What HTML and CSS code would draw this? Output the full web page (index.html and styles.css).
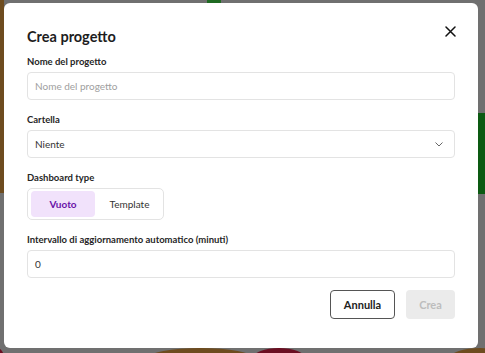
FILE: index.html
```html
<!DOCTYPE html>
<html lang="it">
<head>
<meta charset="utf-8">
<link rel="stylesheet" href="styles.css">
</head>
<body>
<div class="backdrop">
  <div class="bg-left"></div>
  <div class="bg-top"></div>
  <div class="bg-right"></div>
  <div class="bg-bottom">
    <span class="dot crimson d1"></span>
    <span class="dot brown d2"></span>
    <span class="dot crimson d3"></span>
    <span class="dot brown d4"></span>
  </div>
</div>
<div class="modal">
  <div class="header">
    <h1 class="title">Crea progetto</h1>
    <button class="close" aria-label="Chiudi">
      <svg width="11" height="11" viewBox="0 0 11 11"><path d="M1 1L10 10M10 1L1 10" stroke="#111" stroke-width="1.5" stroke-linecap="round"/></svg>
    </button>
  </div>
  <div class="field">
    <label class="label">Nome del progetto</label>
    <div class="input placeholder">Nome del progetto</div>
  </div>
  <div class="field">
    <label class="label">Cartella</label>
    <div class="input select">
      <span>Niente</span>
      <svg width="8" height="5" viewBox="0 0 8 5"><path d="M0.5 0.5L4 4L7.5 0.5" fill="none" stroke="#666" stroke-width="1"/></svg>
    </div>
  </div>
  <div class="field">
    <label class="label">Dashboard type</label>
    <div class="segment">
      <span class="seg active">Vuoto</span>
      <span class="seg">Template</span>
    </div>
  </div>
  <div class="field">
    <label class="label">Intervallo di aggiornamento automatico (minuti)</label>
    <div class="input">0</div>
  </div>
  <div class="actions">
    <button class="btn outline">Annulla</button>
    <button class="btn disabled">Crea</button>
  </div>
</div>
</body>
</html>
```
FILE: styles.css
```css
* { box-sizing: border-box; }
html, body { margin: 0; padding: 0; }
body {
  width: 485px;
  height: 353px;
  overflow: hidden;
  background: #707070;
  font-family: "Lato", "Open Sans", sans-serif;
  position: relative;
}
.backdrop { position: absolute; inset: 0; }
.bg-left { position: absolute; left: 0; top: 0; width: 4px; height: 193px; background: #6e4c1f; }
.bg-top { position: absolute; left: 207px; top: 0; width: 14px; height: 3px; background: #1f6a22; }
.bg-right { position: absolute; left: 478px; top: 113px; width: 7px; height: 81px; background: #0c5a12; }
.bg-bottom { position: absolute; left: 0; top: 348px; width: 485px; height: 5px; overflow: hidden; }
.dot { position: absolute; top: 0; height: 20px; border-radius: 50%; }
.crimson { background: #6b0f22; }
.brown { background: #6e4c1f; }
.d1 { left: -10px; width: 14px; }
.d2 { left: 148px; width: 105px; }
.d3 { left: 253px; width: 52px; }
.d4 { left: 450px; width: 60px; }

.modal {
  position: absolute;
  left: 4px;
  top: 3px;
  width: 474px;
  height: 345px;
  background: #fff;
  border-radius: 6px;
  padding: 24px 23px 0 23px;
  display: flex;
  flex-direction: column;
}
.header {
  display: flex;
  justify-content: space-between;
  align-items: flex-start;
  height: 29px;
}
.title {
  margin: 0;
  font-size: 14.5px;
  font-weight: 700;
  color: #1d1d1d;
  line-height: 20px;
}
.close {
  border: 0;
  background: none;
  padding: 0;
  margin: -1px -1px 0 0;
  width: 11px;
  height: 11px;
  display: flex;
}
.field { display: flex; flex-direction: column; margin-bottom: 14px; }
.label {
  font-size: 9.5px;
  font-weight: 700;
  color: #262626;
  line-height: 12px;
  margin-bottom: 4px;
}
.input {
  height: 28px;
  border: 1px solid #e3e3e3;
  border-radius: 4px;
  padding: 0 7px;
  font-size: 10px;
  color: #333;
  display: flex;
  align-items: center;
}
.placeholder { color: #a0a0a0; }
.select { justify-content: space-between; padding-right: 11px; }
.segment {
  align-self: flex-start;
  width: 137px;
  height: 32px;
  border: 1px solid #e3e3e3;
  border-radius: 5px;
  padding: 2px 3px;
  display: flex;
  gap: 4px;
}
.seg {
  width: 64px;
  height: 26px;
  border-radius: 4px;
  font-size: 10px;
  display: flex;
  align-items: center;
  justify-content: center;
  color: #333;
}
.seg.active { background: #f1e2fb; color: #6a12a8; font-weight: 700; }
.seg + .seg { width: 61px; }
.actions {
  display: flex;
  justify-content: flex-end;
  gap: 11px;
  margin-top: -2px;
}
.btn {
  height: 29px;
  border-radius: 4px;
  font-family: inherit;
  font-size: 11px;
  font-weight: 700;
  padding: 0;
}
.outline { width: 65px; background: #fff; border: 1px solid #555; color: #222; }
.disabled { width: 49px; background: #ebebeb; border: 0; color: #bdbdbd; }
```
